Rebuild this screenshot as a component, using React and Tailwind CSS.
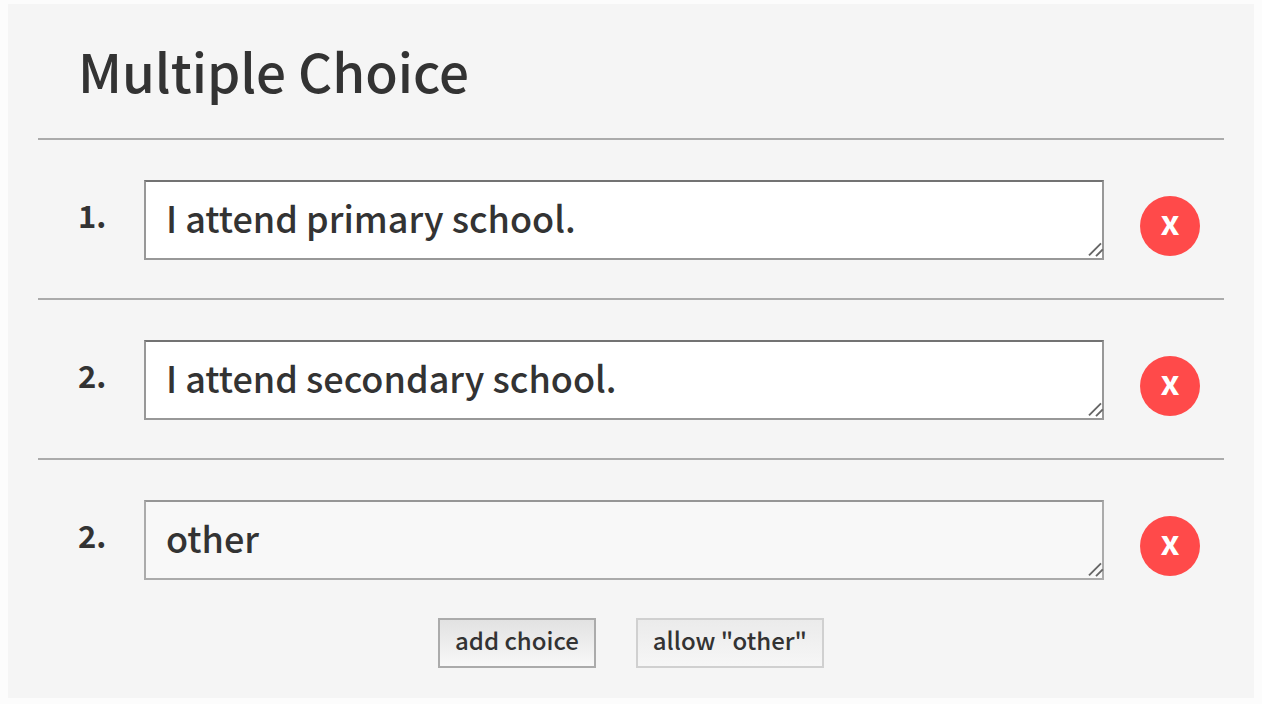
import { useState } from "react";

const initialChoices = [
  { id: "primary", number: "1.", text: "I attend primary school.", other: false },
  { id: "secondary", number: "2.", text: "I attend secondary school.", other: false },
  { id: "other", number: "2.", text: "other", other: true },
];

function ResizeGrip() {
  return (
    <svg
      aria-hidden="true"
      viewBox="0 0 16 16"
      className="pointer-events-none absolute right-0.5 bottom-0.5 h-4 w-4 overflow-visible"
      fill="none"
      stroke="#666666"
      strokeWidth="1.9"
    >
      <path d="M3 13.4 L15 1.4 M10 14.2 L16.8 7.4" />
    </svg>
  );
}

function ChoiceRow({ choice, onChange, onRemove }) {
  const fieldStyle = choice.other
    ? "bg-[#f8f8f8] border-[#ababab] border-t-[#969696]"
    : "bg-white border-[#989898] border-t-[#737373]";
  return (
    <li className="flex items-start border-t-2 border-[#ababab] pt-10 pr-6 pb-[38px] pl-10 last:pb-0">
      <label htmlFor={choice.id} className="w-[66px] shrink-0 pt-2.5 text-[31px] leading-[50px] font-bold">
        {choice.number}
      </label>
      <div className="relative h-20 min-w-0 flex-1">
        <textarea
          id={choice.id}
          rows={1}
          value={choice.text}
          onChange={(e) => onChange(choice.id, e.target.value)}
          className={`block h-full w-full resize-none overflow-hidden border-2 px-5 pt-2.5 text-[36px] leading-[50px] font-medium outline-none ${fieldStyle}`}
        />
        <ResizeGrip />
      </div>
      <button
        type="button"
        aria-label={`x, remove ${choice.text}`}
        onClick={() => onRemove(choice.id)}
        className="mt-4 ml-9 flex h-[60px] w-[60px] shrink-0 items-center justify-center rounded-full bg-[#ff4a4a] pb-2.5 text-[34px] leading-10 font-bold text-white"
      >
        x
      </button>
    </li>
  );
}

export default function App() {
  const [choices, setChoices] = useState(initialChoices);

  const change = (id, text) => setChoices((list) => list.map((c) => (c.id === id ? { ...c, text } : c)));
  const remove = (id) => setChoices((list) => list.filter((c) => c.id !== id));
  const add = () =>
    setChoices((list) => [
      ...list,
      { id: `choice-${Date.now()}`, number: `${list.length + 1}.`, text: "", other: false },
    ]);

  return (
    <div className="min-h-screen bg-[#fcfcfc] px-2 pt-1 pb-1.5 font-['Noto_Sans_CJK_SC','Open_Sans',sans-serif] text-[#333333]">
      <main className="bg-[#f5f5f5] px-[30px] pb-[30px]">
        <h1 className="px-10 pt-[26px] pb-7 text-[53px] leading-[80px] font-medium">Multiple Choice</h1>
        <ul>
          {choices.map((choice) => (
            <ChoiceRow key={choice.id} choice={choice} onChange={change} onRemove={remove} />
          ))}
        </ul>
        <div className="mt-[38px] flex justify-center gap-10">
          <button
            type="button"
            onClick={add}
            className="h-[50px] border-2 border-[#ababab] bg-linear-to-b from-[#e2e2e2] to-[#f8f8f8] px-[15px] pb-1.5 text-[24px] leading-10 font-medium"
          >
            add choice
          </button>
          <button
            type="button"
            className="h-[50px] border-2 border-[#d0d0d0] bg-linear-to-b from-[#ebebeb] to-[#f6f6f6] px-[15px] pb-1.5 text-[24px] leading-10 font-medium"
          >
            allow "other"
          </button>
        </div>
      </main>
    </div>
  );
}
